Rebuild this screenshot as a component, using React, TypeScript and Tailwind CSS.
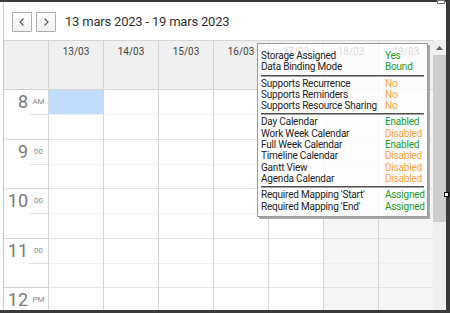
import type { ReactNode } from "react"

const days = ["13/03", "14/03", "15/03", "16/03", "17/03", "18/03", "19/03"]

const hours = [
  { label: "8", suffix: "AM", height: "h-[50px]" },
  { label: "9", suffix: "00", height: "h-[49px]" },
  { label: "10", suffix: "00", height: "h-[50px]" },
  { label: "11", suffix: "00", height: "h-[49px]" },
  { label: "12", suffix: "PM", height: "h-[50px]" },
]

type InfoRow = { label: string; value: string; ok: boolean }

const groups: InfoRow[][] = [
  [
    { label: "Storage Assigned", value: "Yes", ok: true },
    { label: "Data Binding Mode", value: "Bound", ok: true },
  ],
  [
    { label: "Supports Recurrence", value: "No", ok: false },
    { label: "Supports Reminders", value: "No", ok: false },
    { label: "Supports Resource Sharing", value: "No", ok: false },
  ],
  [
    { label: "Day Calendar", value: "Enabled", ok: true },
    { label: "Work Week Calendar", value: "Disabled", ok: false },
    { label: "Full Week Calendar", value: "Enabled", ok: true },
    { label: "Timeline Calendar", value: "Disabled", ok: false },
    { label: "Gantt View", value: "Disabled", ok: false },
    { label: "Agenda Calendar", value: "Disabled", ok: false },
  ],
  [
    { label: "Required Mapping 'Start'", value: "Assigned", ok: true },
    { label: "Required Mapping 'End'", value: "Assigned", ok: true },
  ],
]

function NavButton({ children }: { children: ReactNode }) {
  return (
    <button className="flex h-[20px] w-[20px] items-center justify-center rounded-[1px] border border-[#acacac] bg-gradient-to-b from-white to-[#f0f0f0]">
      {children}
    </button>
  )
}

function TimeRuler() {
  return (
    <div className="flex w-[44px] flex-col">
      <div className="h-[50px] shrink-0 border-y border-[#d5d5d5] bg-[#f0f0f0]" />
      {hours.map((hour) => (
        <div
          key={hour.label}
          className={`relative ${hour.height} shrink-0 border-b border-[#d3d3d3]`}
        >
          <div className="ml-[25px] h-[25px] border-b border-[#e3e3e3]" />
          <span className="absolute left-0 top-[1px] w-[24px] text-right text-[18px] leading-[22px] text-[#7a7a7a]">
            {hour.label}
          </span>
          <span className="absolute left-[25px] top-[7px] w-[19px] text-center text-[8px] leading-[10px] text-[#8a8a8a]">
            {hour.suffix}
          </span>
        </div>
      ))}
    </div>
  )
}

function DayColumn({ day, index }: { day: string; index: number }) {
  const weekend = index >= 5

  return (
    <div className="flex w-[55px] flex-col border-l border-[#d5d5d5]">
      <div className="h-[50px] shrink-0 border-y border-[#d5d5d5] bg-[#f0f0f0] pt-[5px] text-center text-[10px] leading-[12px] text-[#444]">
        {day}
      </div>
      {hours.map((hour, hourIndex) => (
        <div
          key={hour.label}
          className={`${hour.height} shrink-0 border-b border-[#e4e4e4] ${weekend ? "bg-[#f5f5f5]" : "bg-white"}`}
        >
          <div
            className={`h-[25px] border-b border-[#efefef] ${index === 0 && hourIndex === 0 ? "bg-[#c1ddfb]" : ""}`}
          />
        </div>
      ))}
    </div>
  )
}

function InfoPopup() {
  return (
    <div className="absolute left-[257px] top-[43px] w-[171px] border border-[#9a9a9a] bg-white/80 px-[3px] pt-[6px] pb-[4px] text-[10px] leading-[11.3px] tracking-[-0.2px] text-[#222] shadow-[2px_2px_0_#a8a8a8]">
      {groups.map((group, groupIndex) => (
        <div key={groupIndex}>
          {groupIndex > 0 ? (
            <div className="mb-[1px] mt-[2px] h-[2px] border-t border-b border-t-[#505050] border-b-[#a0a0a0]" />
          ) : null}
          {group.map((row) => (
            <div key={row.label} className="flex whitespace-nowrap">
              <span className="w-[124px] shrink-0">{row.label}</span>
              <span className={row.ok ? "text-[#229a22]" : "text-[#ffa040]"}>
                {row.value}
              </span>
            </div>
          ))}
        </div>
      ))}
    </div>
  )
}

export default function App() {
  return (
    <div
      className="relative h-[313px] w-[450px] bg-white"
      style={{ fontFamily: "Roboto, 'Liberation Sans', sans-serif" }}
    >
      <div className="flex h-full w-full flex-col overflow-hidden border-t-2 border-r-4 border-b-[3px] border-[#3a3a3a] bg-white pl-[3px]">
        <div className="flex h-full flex-col border-l border-[#c8c8c8]">
          <div className="flex h-[38px] shrink-0 items-start gap-[4px] pl-[8px] pt-[10px]">
            <NavButton>
              <svg width="10" height="10" viewBox="0 0 10 10">
                <polyline points="6.5,1.5 3,5 6.5,8.5" fill="none" stroke="#555" strokeWidth="1.1" />
              </svg>
            </NavButton>
            <NavButton>
              <svg width="10" height="10" viewBox="0 0 10 10">
                <polyline points="3.5,1.5 7,5 3.5,8.5" fill="none" stroke="#555" strokeWidth="1.1" />
              </svg>
            </NavButton>
            <span className="ml-[5px] mt-[1px] text-[13px] leading-[18px] tracking-[-0.2px] text-[#333]">
              13 mars 2023 - 19 mars 2023
            </span>
          </div>

          <div className="flex min-h-0 flex-1 overflow-hidden">
            <TimeRuler />
            {days.map((day, index) => (
              <DayColumn key={day} day={day} index={index} />
            ))}
            <div className="flex w-[13px] shrink-0 flex-col bg-[#f0f0f0]">
              <div className="flex h-[15px] shrink-0 items-center justify-center">
                <svg width="7" height="4" viewBox="0 0 7 4">
                  <polygon points="0,4 3.5,0 7,4" fill="#606060" />
                </svg>
              </div>
              <div className="h-[167px] shrink-0 bg-[#cdcdcd]" />
            </div>
          </div>
        </div>
      </div>

      <InfoPopup />

      <div className="absolute left-[437px] top-0 h-[4px] w-[8px] border border-[#777] bg-white" />
      <div className="absolute left-[444px] top-[192px] h-[5px] w-[5px] border border-black bg-white" />
    </div>
  )
}
